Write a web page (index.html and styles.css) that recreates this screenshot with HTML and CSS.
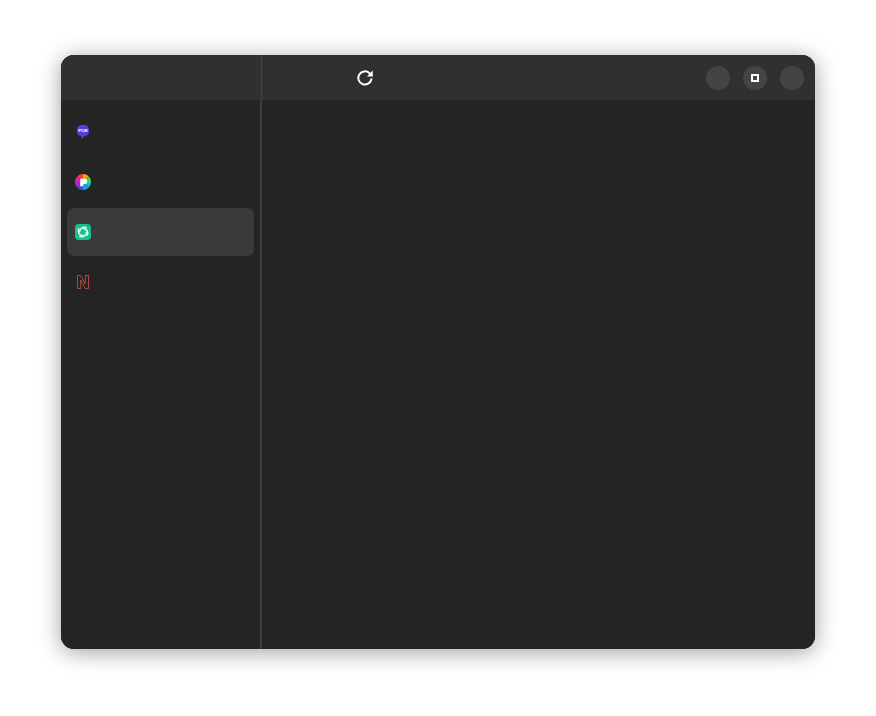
FILE: index.html
```html
<!DOCTYPE html>
<html lang="en">
<head>
<meta charset="utf-8">
<title>Apps</title>
<link rel="stylesheet" href="styles.css">
</head>
<body>
<div class="window">
  <aside class="sidebar">
    <div class="side-head"></div>
    <nav class="app-list">
      <div class="app">
        <svg class="icon" viewBox="0 0 16 16"><path fill="#5340dc" d="M6.500 1h3a4.500 4.500 0 0 1 4.500 4.500v2A4.500 4.500 0 0 1 9.500 12H9c-.5 1.300-1.500 2.500-3 3 .3-.8.400-1.800.2-3A4.500 4.500 0 0 1 2 7.500v-2A4.500 4.500 0 0 1 6.500 1z"/><text class="poe" x="8" y="7.900" text-anchor="middle" textLength="9.600" lengthAdjust="spacingAndGlyphs">POE</text></svg>
      </div>
      <div class="app">
        <svg class="icon" viewBox="0 0 16 16">
          <path fill="#f0403a" d="M8 8 2.300 2.300A8 8 0 0 1 8 0z"/>
          <path fill="#f7a21b" d="M8 8V0a8 8 0 0 1 5.700 2.300z"/>
          <path fill="#4fd13a" d="M8 8l5.700-5.700A8 8 0 0 1 16 8z"/>
          <path fill="#10c9a0" d="M8 8h8a8 8 0 0 1-2.300 5.700z"/>
          <path fill="#1e9cf0" d="M8 8l5.700 5.700A8 8 0 0 1 8 16z"/>
          <path fill="#3a50e0" d="M8 8v8a8 8 0 0 1-5.700-2.300z"/>
          <path fill="#9a2fd0" d="M8 8l-5.700 5.700A8 8 0 0 1 0 8z"/>
          <path fill="#e0259a" d="M8 8H0a8 8 0 0 1 2.300-5.700z"/>
          <path fill="#fff" d="M5.200 4.800h4.300a2.700 2.700 0 0 1 0 5.400H8v2H5.200z"/>
        </svg>
      </div>
      <div class="app active">
        <svg class="icon" viewBox="0 0 16 16"><rect width="16" height="16" rx="3.800" fill="#14c08d"/><g fill="none" stroke="#fff" stroke-width="1.300" stroke-linecap="round"><path d="M4.600 7.800C4.600 4.800 8 1.800 11.300 3.800"/><path transform="rotate(90 8 8)" d="M4.600 7.800C4.600 4.800 8 1.800 11.300 3.800"/><path transform="rotate(180 8 8)" d="M4.600 7.800C4.600 4.800 8 1.800 11.300 3.800"/><path transform="rotate(270 8 8)" d="M4.600 7.800C4.600 4.800 8 1.800 11.300 3.800"/></g></svg>
      </div>
      <div class="app">
        <svg class="icon" viewBox="0 0 16 16"><path fill="none" stroke="#c04d4a" stroke-width=".9" d="M2.500 1.500h3.200l4.600 8.500V1.500h3.200v13h-3.200L5.700 6v8.500H2.500z"/></svg>
      </div>
    </nav>
  </aside>
  <main class="content">
    <header class="toolbar">
      <svg class="reload" viewBox="0 0 16 16"><path fill="none" stroke="#fff" stroke-width="2" stroke-linecap="round" d="M14.400 9.200A6.600 6.600 0 1 1 12.400 3.100L14 4.700"/><path fill="#fff" d="M15.800 .6V6.500H9.900z"/></svg>
      <div class="controls">
        <span class="ctl"></span>
        <span class="ctl"><span class="max"></span></span>
        <span class="ctl"></span>
      </div>
    </header>
    <div class="page"></div>
  </main>
</div>
</body>
</html>
```
FILE: styles.css
```css
* { box-sizing: border-box; }
html, body { height: 100%; }
body {
  margin: 0;
  background: #fff;
  padding: 55px 61px 67px;
  font-family: "Liberation Sans", sans-serif;
}
.window {
  width: 754px;
  height: 594px;
  display: flex;
  border-radius: 13px;
  overflow: hidden;
  background: #242424;
  box-shadow: 0 3px 22px rgba(0, 0, 0, .38);
}
.sidebar {
  width: 201px;
  flex: none;
  display: flex;
  flex-direction: column;
  background: #242424;
}
.side-head {
  height: 46px;
  flex: none;
  background: #303030;
  border-right: 1px solid #454545;
  border-bottom: 1px solid #2a2a2a;
}
.app-list {
  flex: 1;
  padding: 7px 6px;
  display: flex;
  flex-direction: column;
  gap: 2px;
  border-right: 2px solid #3f3f3f;
}
.app {
  height: 48px;
  width: 187px;
  display: flex;
  align-items: center;
  padding-left: 8px;
  border-radius: 7px;
}
.app.active { background: #3a3a3a; }
.icon { width: 16px; height: 16px; display: block; }
.poe { font: 700 3.600px "Liberation Sans", sans-serif; fill: #fff; }
.content {
  flex: 1;
  display: flex;
  flex-direction: column;
}
.toolbar {
  height: 46px;
  flex: none;
  background: #303030;
  border-bottom: 1px solid #2a2a2a;
  display: flex;
  align-items: center;
  justify-content: space-between;
  padding: 0 11px 0 95px;
}
.reload { width: 16px; height: 16px; display: block; }
.controls { display: flex; gap: 13px; }
.ctl {
  width: 24px;
  height: 24px;
  border-radius: 50%;
  background: #444;
  display: flex;
  align-items: center;
  justify-content: center;
}
.max {
  width: 8px;
  height: 8px;
  border: 2px solid #fff;
}
.page { flex: 1; background: #242424; }
```
